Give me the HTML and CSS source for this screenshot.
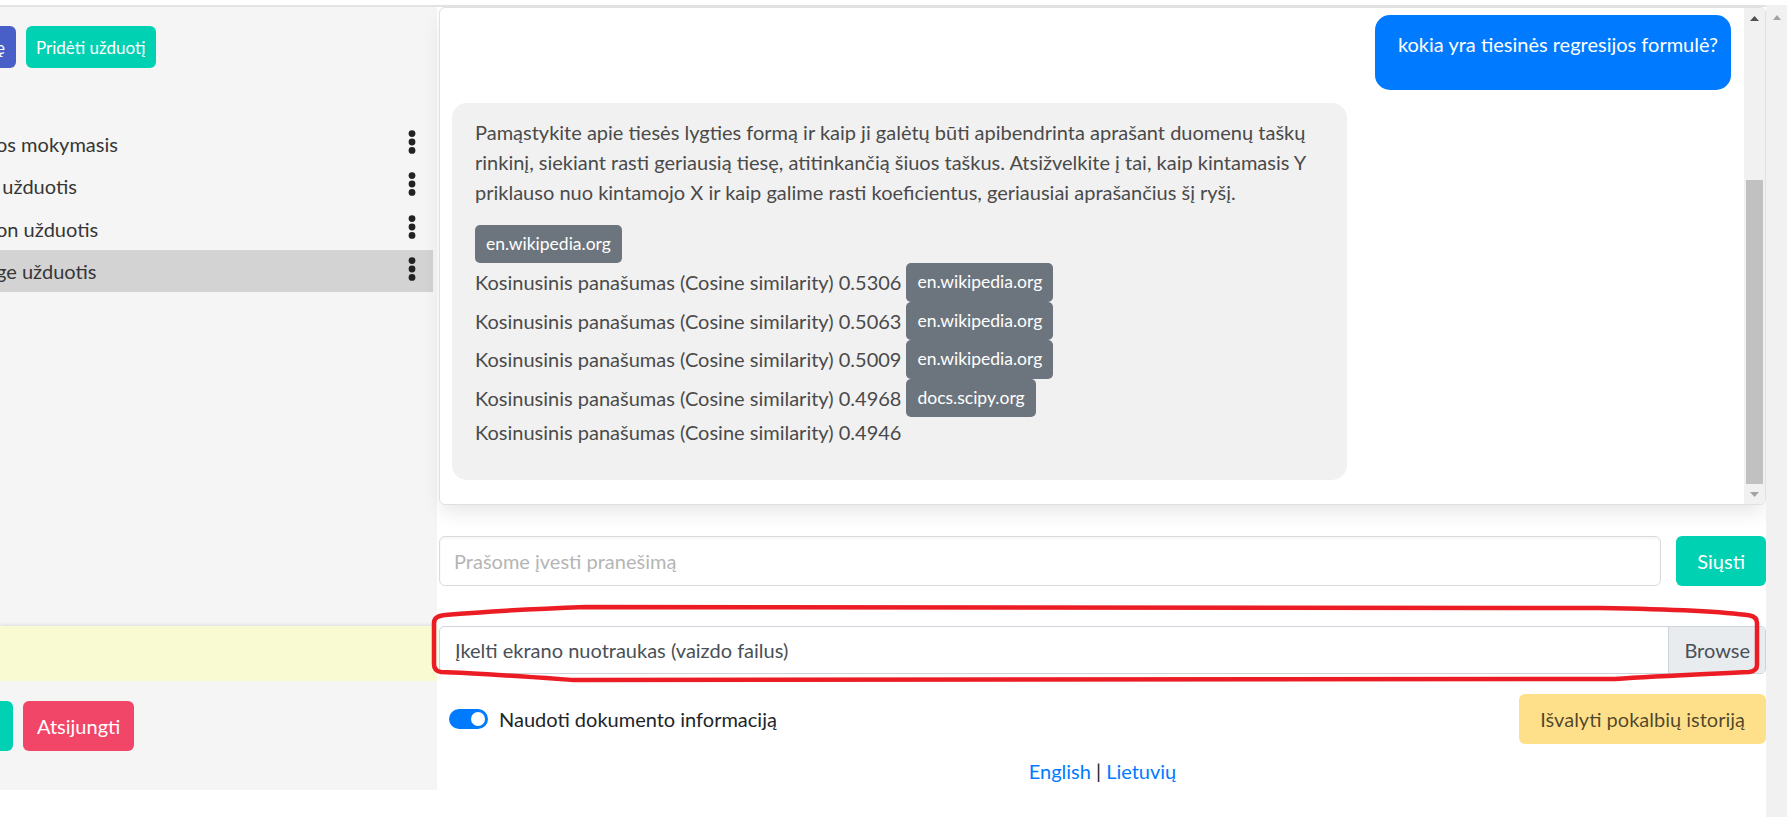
FILE: index.html
```html
<!DOCTYPE html>
<html lang="lt">
<head>
<meta charset="utf-8">
<title>Pokalbis</title>
<link rel="stylesheet" href="styles.css">
</head>
<body>
<div class="topband"></div>
<div class="page">
  <div class="app">
    <aside class="sidebar">
      <div class="side-actions">
        <button class="btn btn-blue-cut" type="button">ę</button>
        <button class="btn btn-teal btn-small" type="button">Pridėti užduotį</button>
      </div>
      <ul class="task-list">
        <li class="task"><span class="task-name">os mokymasis</span><svg class="kebab" viewBox="0 0 10 24" width="10" height="24"><circle cx="5" cy="3.6" r="3.4"/><circle cx="5" cy="12" r="3.4"/><circle cx="5" cy="20.4" r="3.4"/></svg></li>
        <li class="task"><span class="task-name">&nbsp;&#8202;užduotis</span><svg class="kebab" viewBox="0 0 10 24" width="10" height="24"><circle cx="5" cy="3.6" r="3.4"/><circle cx="5" cy="12" r="3.4"/><circle cx="5" cy="20.4" r="3.4"/></svg></li>
        <li class="task"><span class="task-name">on užduotis</span><svg class="kebab" viewBox="0 0 10 24" width="10" height="24"><circle cx="5" cy="3.6" r="3.4"/><circle cx="5" cy="12" r="3.4"/><circle cx="5" cy="20.4" r="3.4"/></svg></li>
        <li class="task active"><span class="task-name">ge užduotis</span><svg class="kebab" viewBox="0 0 10 24" width="10" height="24"><circle cx="5" cy="3.6" r="3.4"/><circle cx="5" cy="12" r="3.4"/><circle cx="5" cy="20.4" r="3.4"/></svg></li>
      </ul>
      <div class="side-spacer"></div>
      <div class="notice"></div>
      <div class="side-bottom">
        <button class="btn btn-teal-cut" type="button"></button>
        <button class="btn btn-danger" type="button">Atsijungti</button>
      </div>
    </aside>

    <main class="main">
      <section class="chat-card">
        <div class="messages">
          <div class="msg user">kokia yra tiesinės regresijos formulė?</div>
          <div class="msg bot">
            <p>Pamąstykite apie tiesės lygties formą ir kaip ji galėtų būti apibendrinta aprašant duomenų taškų<br>rinkinį, siekiant rasti geriausią tiesę, atitinkančią šiuos taškus. Atsižvelkite į tai, kaip kintamasis Y<br>priklauso nuo kintamojo X ir kaip galime rasti koeficientus, geriausiai aprašančius šį ryšį.</p>
            <a class="source" href="#">en.wikipedia.org</a>
            <div class="sim-row"><span>Kosinusinis panašumas (Cosine similarity) 0.5306</span><a class="source" href="#">en.wikipedia.org</a></div>
            <div class="sim-row"><span>Kosinusinis panašumas (Cosine similarity) 0.5063</span><a class="source" href="#">en.wikipedia.org</a></div>
            <div class="sim-row"><span>Kosinusinis panašumas (Cosine similarity) 0.5009</span><a class="source" href="#">en.wikipedia.org</a></div>
            <div class="sim-row"><span>Kosinusinis panašumas (Cosine similarity) 0.4968</span><a class="source" href="#">docs.scipy.org</a></div>
            <div class="sim-row"><span>Kosinusinis panašumas (Cosine similarity) 0.4946</span></div>
          </div>
        </div>
        <div class="vscroll">
          <div class="vs-btn up"><svg width="9" height="5" viewBox="0 0 9 5"><polygon points="0,5 9,5 4.5,0"/></svg></div>
          <div class="vs-track"><div class="vs-thumb"></div></div>
          <div class="vs-btn down"><svg width="9" height="5" viewBox="0 0 9 5"><polygon points="0,0 9,0 4.5,5"/></svg></div>
        </div>
      </section>

      <form class="send-row" onsubmit="return false">
        <input class="msg-input" type="text" placeholder="Prašome įvesti pranešimą">
        <button class="btn btn-teal btn-send" type="button">Siųsti</button>
      </form>

      <div class="upload">
        <div class="file-label"><span class="file-text">Įkelti ekrano nuotraukas (vaizdo failus)</span><span class="browse">Browse</span></div>
        <svg class="annot" width="1347" height="95" viewBox="429 600 1347 95" preserveAspectRatio="none">
          <path d="M586 607 L1600 608 C1660 609 1720 611 1750 615.5 Q1757 617 1757 623 L1757 665 Q1757 671 1749 672 C1710 674 1660 676 1615 679 L573 680 C530 677 475 673 441 672 Q434 671 434 664 L434 623 Q434 616 445 615 C480 612 530 609 586 607 Z"/>
        </svg>
      </div>

      <div class="controls">
        <label class="switch"><span class="track"><span class="knob"></span></span><span class="switch-label">Naudoti dokumento informaciją</span></label>
        <button class="btn btn-warning" type="button">Išvalyti pokalbių istoriją</button>
      </div>

      <footer class="lang"><a href="#">English</a> | <a href="#">Lietuvių</a></footer>
    </main>
  </div>
  <div class="page-scroll"><svg width="8" height="5" viewBox="0 0 8 5"><polygon points="0,5 8,5 4,0"/></svg></div>
</div>
</body>
</html>
```

FILE: styles.css
```css
* { box-sizing: border-box; }

html, body {
  margin: 0;
  padding: 0;
}

body {
  width: 1787px;
  height: 817px;
  overflow: hidden;
  background: #fff;
  font-family: Lato, "Noto Sans", sans-serif;
  font-size: 20px;
  line-height: 30px;
  color: #4a4a4a;
}

.topband {
  height: 5px;
  background: #fff;
}

.page {
  display: flex;
  height: 812px;
}

.app {
  flex: 1;
  display: flex;
  align-items: flex-start;
  border-top: 2px solid #e3e3e3;
  min-width: 0;
}

.page-scroll {
  width: 21px;
  background: #f1f1f1;
  display: flex;
  justify-content: center;
  padding-top: 10px;
}

.page-scroll svg { fill: #a3a3a3; }

/* ---------- buttons ---------- */
.btn {
  font-family: inherit;
  border: none;
  color: #fff;
  border-radius: 6px;
  display: inline-flex;
  align-items: center;
  justify-content: center;
  white-space: nowrap;
  padding: 0;
  cursor: pointer;
}

.btn-small {
  height: 42px;
  font-size: 17px;
  padding: 0 10px;
}

.btn-teal { background: #00d1b2; }

.btn-blue-cut {
  width: 16px;
  height: 42px;
  background: #485fc7;
  font-size: 17.5px;
  justify-content: flex-end;
  padding-right: 11px;
  overflow: hidden;
  border-radius: 0 6px 6px 0;
}

.btn-teal-cut {
  width: 13px;
  height: 50px;
  background: #00d1b2;
  border-radius: 0 6px 6px 0;
}

.btn-danger {
  height: 50px;
  background: #f14668;
  font-size: 20px;
  padding: 0 14px;
}

.btn-send {
  height: 50px;
  font-size: 20px;
  padding: 0 21px;
}

.btn-warning {
  height: 50px;
  background: #ffe08a;
  color: rgba(0, 0, 0, 0.7);
  font-size: 20px;
  padding: 0 21px;
}

/* ---------- sidebar ---------- */
.sidebar {
  width: 437px;
  height: 783px;
  flex-shrink: 0;
  background: #f5f5f5;
  display: flex;
  flex-direction: column;
  padding: 19px 0 39px 0;
}

.side-actions {
  display: flex;
  gap: 10px;
  height: 42px;
}

.task-list {
  list-style: none;
  margin: 55px 4px 0 0;
  padding: 0;
}

.task {
  height: 42.25px;
  display: flex;
  align-items: center;
  justify-content: space-between;
  padding-right: 16px;
  color: #363636;
  white-space: nowrap;
}

.task.active { background: #d3d3d3; }

.task-name { text-indent: -4px; }

.kebab {
  fill: #222;
  margin-bottom: 4px;
}

.side-spacer { flex: 1; }

.notice {
  height: 55px;
  background: #fafad2;
  box-shadow: 0 -2px 3px rgba(0, 0, 0, 0.07);
}

.side-bottom {
  display: flex;
  gap: 10px;
  margin-top: 20px;
  height: 50px;
}

/* ---------- main ---------- */
.main {
  flex: 1;
  min-width: 0;
  margin-left: 2px;
  display: flex;
  flex-direction: column;
}

.chat-card {
  height: 498px;
  display: flex;
  background: #fff;
  border: 1px solid #e0e0e0;
  border-radius: 6px;
  box-shadow: 0 10px 20px -3px rgba(10, 10, 10, 0.1);
  overflow: hidden;
}

.messages {
  flex: 1;
  min-width: 0;
  display: flex;
  flex-direction: column;
  justify-content: flex-end;
  gap: 13px;
  padding: 8px 13px 24px 12px;
  overflow: hidden;
}

.msg {
  border-radius: 15px;
}

.msg.user {
  align-self: flex-end;
  background: #007bff;
  color: #fff;
  padding: 14px 13px 31px 23px;
  white-space: nowrap;
}

.msg.bot {
  align-self: flex-start;
  width: 70%;
  background: #f1f1f1;
  color: #4a4a4a;
  padding: 14px 23px 33px 23px;
  display: flex;
  flex-direction: column;
  align-items: flex-start;
}

.msg.bot p {
  margin: 0 0 18px 0;
  white-space: nowrap;
}

.source {
  display: inline-block;
  background: #6c757d;
  color: #fff;
  font-size: 17.5px;
  line-height: 26.5px;
  padding: 6px 11px;
  border-radius: 5px;
  text-decoration: none;
  white-space: nowrap;
}

.sim-row {
  display: flex;
  align-items: center;
  gap: 5px;
  white-space: nowrap;
}

.vscroll {
  width: 21px;
  flex-shrink: 0;
  background: #f1f1f1;
  display: flex;
  flex-direction: column;
}

.vs-btn {
  height: 21px;
  display: flex;
  align-items: center;
  justify-content: center;
}

.vs-btn.up svg { fill: #505050; }
.vs-btn.down { height: 20px; }
.vs-btn.down svg { fill: #a3a3a3; }

.vs-track {
  flex: 1;
  display: flex;
  flex-direction: column;
  justify-content: flex-end;
  padding: 0 2px;
}

.vs-thumb {
  height: 304px;
  background: #c1c1c1;
}

/* ---------- send row ---------- */
.send-row {
  margin: 31px 0 0 0;
  display: flex;
  gap: 15px;
  height: 50px;
}

.msg-input {
  flex: 1;
  min-width: 0;
  height: 50px;
  border: 1px solid #dbdbdb;
  border-radius: 6px;
  padding: 0 14px;
  font-family: inherit;
  font-size: 20px;
  color: #363636;
  box-shadow: inset 0 1.25px 2.5px rgba(10, 10, 10, 0.05);
  outline: none;
}

.msg-input::placeholder { color: #b5b5b5; }

/* ---------- upload ---------- */
.upload {
  margin-top: 40px;
  position: relative;
  height: 48px;
}

.file-label {
  display: flex;
  height: 48px;
  border: 1px solid #ced4da;
  border-radius: 5px;
  color: #495057;
  overflow: hidden;
  background: #fff;
}

.file-text {
  flex: 1;
  display: flex;
  align-items: center;
  padding: 0 15px;
}

.browse {
  display: flex;
  align-items: center;
  padding: 0 15px;
  background: #e9ecef;
  border-left: 1px solid #ced4da;
}

.annot {
  position: absolute;
  left: -10px;
  top: -26px;
  pointer-events: none;
  overflow: visible;
}

.annot path {
  fill: none;
  stroke: #ec1c24;
  stroke-width: 4.5;
  stroke-linejoin: round;
}

/* ---------- controls ---------- */
.controls {
  margin-top: 20px;
  height: 50px;
  display: flex;
  align-items: center;
  justify-content: space-between;
}

.switch {
  margin-left: 10px;
  display: flex;
  align-items: center;
  gap: 11px;
  color: #212529;
}

.track {
  width: 39px;
  height: 20px;
  border-radius: 10px;
  background: #007bff;
  display: flex;
  align-items: center;
  justify-content: flex-end;
  padding: 0 3px;
}

.knob {
  width: 14px;
  height: 14px;
  border-radius: 50%;
  background: #fff;
}

.lang {
  margin-top: 12px;
  text-align: center;
  color: #212529;
}

.lang a {
  color: #007bff;
  text-decoration: none;
}
```
